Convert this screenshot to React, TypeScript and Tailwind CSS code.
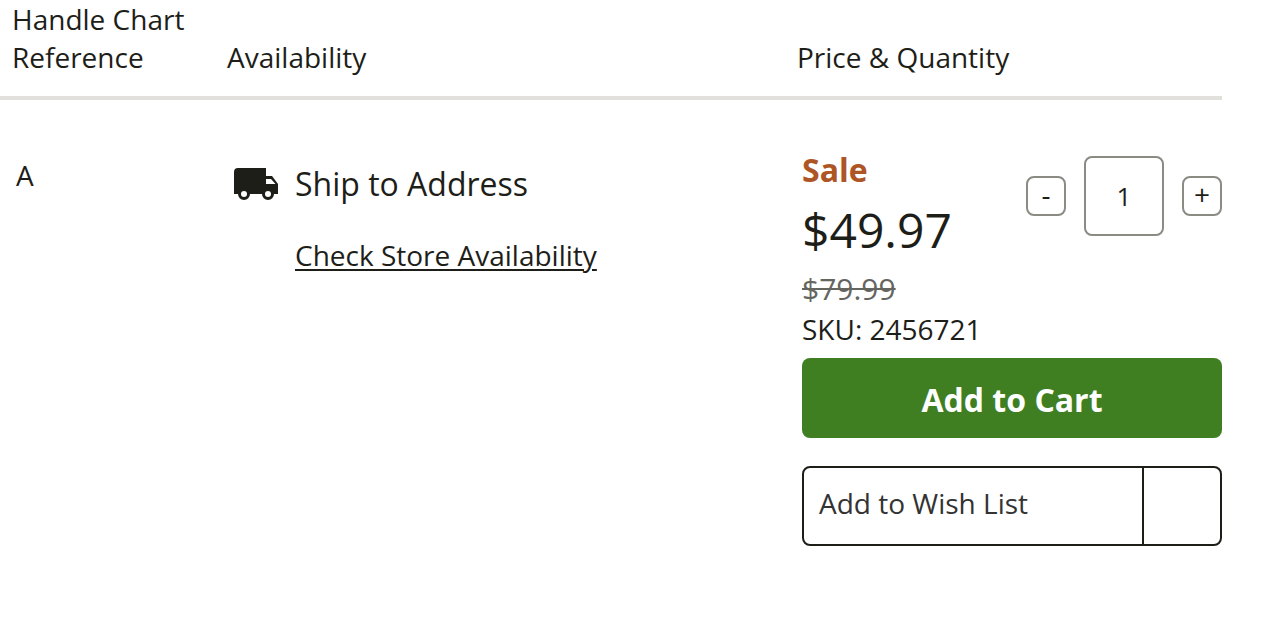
import { useState } from "react";

export default function App() {
  const [quantity, setQuantity] = useState("1");
  const change = (by: number) =>
    setQuantity((value) => String(Math.max(1, (parseInt(value, 10) || 1) + by)));

  return (
    <main className="overflow-hidden bg-white pr-10 font-['Open_Sans',sans-serif] text-[28px] leading-[38px] text-[#1e1e19]">
      <table className="w-full table-fixed border-collapse text-left">
        <thead>
          <tr className="border-b-4 border-[#e1e0dd] align-bottom">
            <th scope="col" className="w-[227px] pr-8 pb-5 pl-3 font-normal">
              Handle Chart Reference
            </th>
            <th scope="col" className="pb-5 font-normal">
              Availability
            </th>
            <th scope="col" className="w-[425px] pb-5 font-normal">
              Price &amp; Quantity
            </th>
          </tr>
        </thead>
        <tbody>
          <tr className="align-top">
            <td className="pt-14 pl-4">A</td>
            <td className="pt-[60px] pl-[7px]">
              <div className="flex items-center gap-[17px] text-[32px] leading-[48px]">
                <svg viewBox="0 0 44 32" className="h-8 w-11" aria-hidden="true">
                  <path
                    fill="#1e1e19"
                    fillRule="evenodd"
                    d="M4 0H32V8H38L44 16V26H40A6 6 0 0 1 28 26H16A6 6 0 0 1 4 26H0V4A4 4 0 0 1 4 0ZM32 11V16H41.5L37 11ZM10 23A3 3 0 1 0 10 29A3 3 0 0 0 10 23ZM34 23A3 3 0 1 0 34 29A3 3 0 0 0 34 23Z"
                  />
                </svg>
                <span>Ship to Address</span>
              </div>
              <a
                href="#stores"
                className="mt-7 ml-[61px] inline-block underline decoration-2 underline-offset-3"
              >
                Check Store Availability
              </a>
            </td>
            <td className="pt-12 pl-[5px]">
              <div className="flex items-start justify-between">
                <div>
                  <p className="text-[32px] leading-[44px] font-bold text-[#ad5524]">Sale</p>
                  <p className="text-[48px] leading-[76px]">$49.97</p>
                  <p className="text-[30px] leading-[42px] text-[#65655f] line-through decoration-2">$79.99</p>
                  <p>SKU: 2456721</p>
                </div>
                <div className="mt-2 flex items-center gap-[18px]">
                  <button
                    type="button"
                    aria-label="Decrease quantity"
                    onClick={() => change(-1)}
                    className="flex size-10 items-center justify-center rounded-lg border-2 border-[#8b8b84] pb-1"
                  >
                    -
                  </button>
                  <input
                    aria-label="Quantity"
                    inputMode="numeric"
                    value={quantity}
                    onChange={(event) => setQuantity(event.target.value)}
                    className="size-20 rounded-lg border-2 border-[#8b8b84] text-center text-[26px]"
                  />
                  <button
                    type="button"
                    aria-label="Increase quantity"
                    onClick={() => change(1)}
                    className="flex size-10 items-center justify-center rounded-lg border-2 border-[#8b8b84] pb-1"
                  >
                    +
                  </button>
                </div>
              </div>
              <button
                type="button"
                className="mt-[10px] h-20 w-full rounded-lg bg-[#3f7f22] pt-1 text-[32px] font-bold text-white"
              >
                Add to Cart
              </button>
              <div className="mt-7 flex h-20 rounded-lg border-2 border-[#1e1e19] text-[#333]">
                <button type="button" className="flex-1 pb-1.5 pl-[15px] text-left">
                  Add to Wish List
                </button>
                <button
                  type="button"
                  aria-label="Choose a wish list"
                  className="w-[78px] border-l-2 border-[#1e1e19]"
                />
              </div>
            </td>
          </tr>
        </tbody>
      </table>
    </main>
  );
}
